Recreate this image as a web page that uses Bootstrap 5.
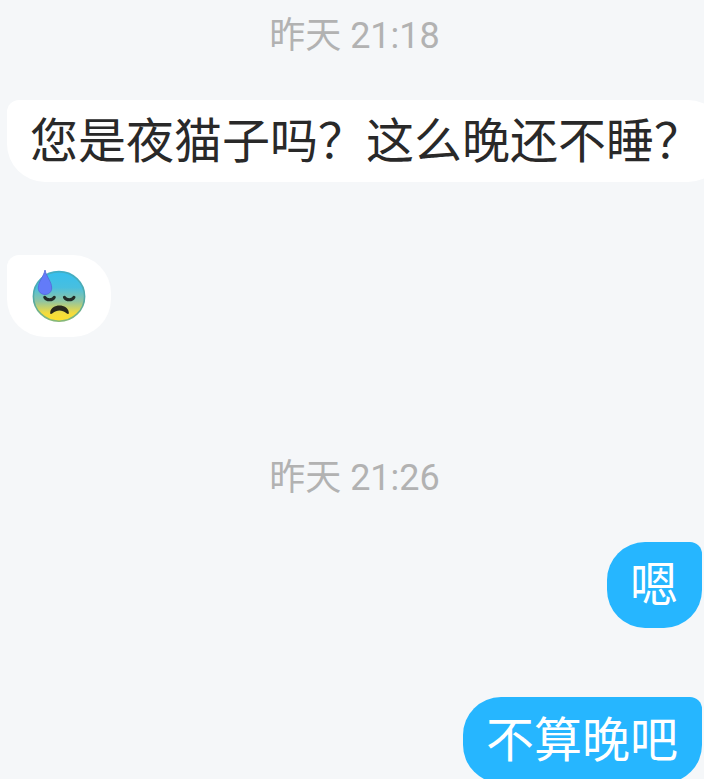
<!DOCTYPE html>
<html lang="zh-CN">
<head>
<meta charset="utf-8">
<meta name="viewport" content="width=device-width, initial-scale=1">
<title>聊天</title>
<link href="https://cdn.jsdelivr.net/npm/bootstrap@5.3.0/dist/css/bootstrap.min.css" rel="stylesheet">
<style>
body { background: #f5f7f9; font-family: Roboto, "Noto Sans CJK SC", sans-serif; }
.chat { padding: 9px 2px 0 7px; }
.stamp { font-size: 36px; line-height: 54px; color: #b2b2b2; }
.bubble { font-size: 48px; padding: 2px 24px 0; }
.received { background: #fff; color: #292929; line-height: 80px; min-height: 82px; padding-left: 23px; border-radius: 12px 38px 38px 38px; }
.sent { background: #26b6ff; color: #fff; line-height: 84px; padding-left: 23px; border-radius: 38px 12px 38px 38px; }
.after-stamp { margin-top: 37px; }
.after-bubble { margin-top: 73px; }
.after-sent { margin-top: 69px; }
.new-session { margin-top: 114px; }
.emoji-bubble { padding: 0 24px; }
</style>
</head>
<body>
<main class="chat d-flex flex-column vh-100 overflow-hidden">
  <time class="stamp flex-shrink-0 text-center">昨天 21:18</time>
  <div class="bubble received after-stamp align-self-start flex-shrink-0 text-nowrap">您是夜猫子吗？这么晚还不睡？</div>
  <div class="bubble received emoji-bubble after-bubble align-self-start flex-shrink-0 d-flex align-items-center">
    <svg width="56" height="56" viewBox="0 0 56 56" role="img" aria-label="冷汗">
      <defs>
        <linearGradient id="face" x1="0" y1="0" x2="0" y2="1">
          <stop offset="0" stop-color="#36bfee"/>
          <stop offset=".32" stop-color="#48bfdf"/>
          <stop offset=".6" stop-color="#91c5a0"/>
          <stop offset=".84" stop-color="#f4dc3d"/>
          <stop offset="1" stop-color="#ffe02b"/>
        </linearGradient>
        <linearGradient id="rim" x1="0" y1="0" x2="0" y2="1">
          <stop offset="0" stop-color="#42aec5"/>
          <stop offset=".6" stop-color="#55a9a2"/>
          <stop offset="1" stop-color="#86b878"/>
        </linearGradient>
      </defs>
      <ellipse cx="28" cy="28.400" rx="25.600" ry="24.800" fill="url(#face)" stroke="url(#rim)" stroke-width="1.600"/>
      <path d="M13.700 29.300C15.500 32.700 21.500 32.700 23.300 29.300M33.400 29.300C35.200 32.700 41.200 32.700 43 29.300" fill="none" stroke="#222c28" stroke-width="3" stroke-linecap="round"/>
      <path d="M19.200 44.500C20 35.300 37 35.300 37.800 44.500C38 46.300 36.800 46.300 35.500 45.300C31 41.700 26 41.700 21.500 45.300C20.200 46.300 19 46.300 19.200 44.500Z" fill="#28271c"/>
      <path d="M14 2C15.500 9 20.700 13.500 20.700 20C20.700 24 17.700 26.500 14 26.500S7.300 24 7.300 20C7.300 13.500 12.500 9 14 2Z" fill="#637bf8" stroke="#5367d8" stroke-width=".8"/>
    </svg>
  </div>
  <time class="stamp new-session flex-shrink-0 text-center">昨天 21:26</time>
  <div class="bubble sent after-stamp align-self-end flex-shrink-0 text-nowrap">嗯</div>
  <div class="bubble sent after-sent align-self-end flex-shrink-0 text-nowrap">不算晚吧</div>
</main>
<script src="https://cdn.jsdelivr.net/npm/bootstrap@5.3.0/dist/js/bootstrap.bundle.min.js"></script>
</body>
</html>
